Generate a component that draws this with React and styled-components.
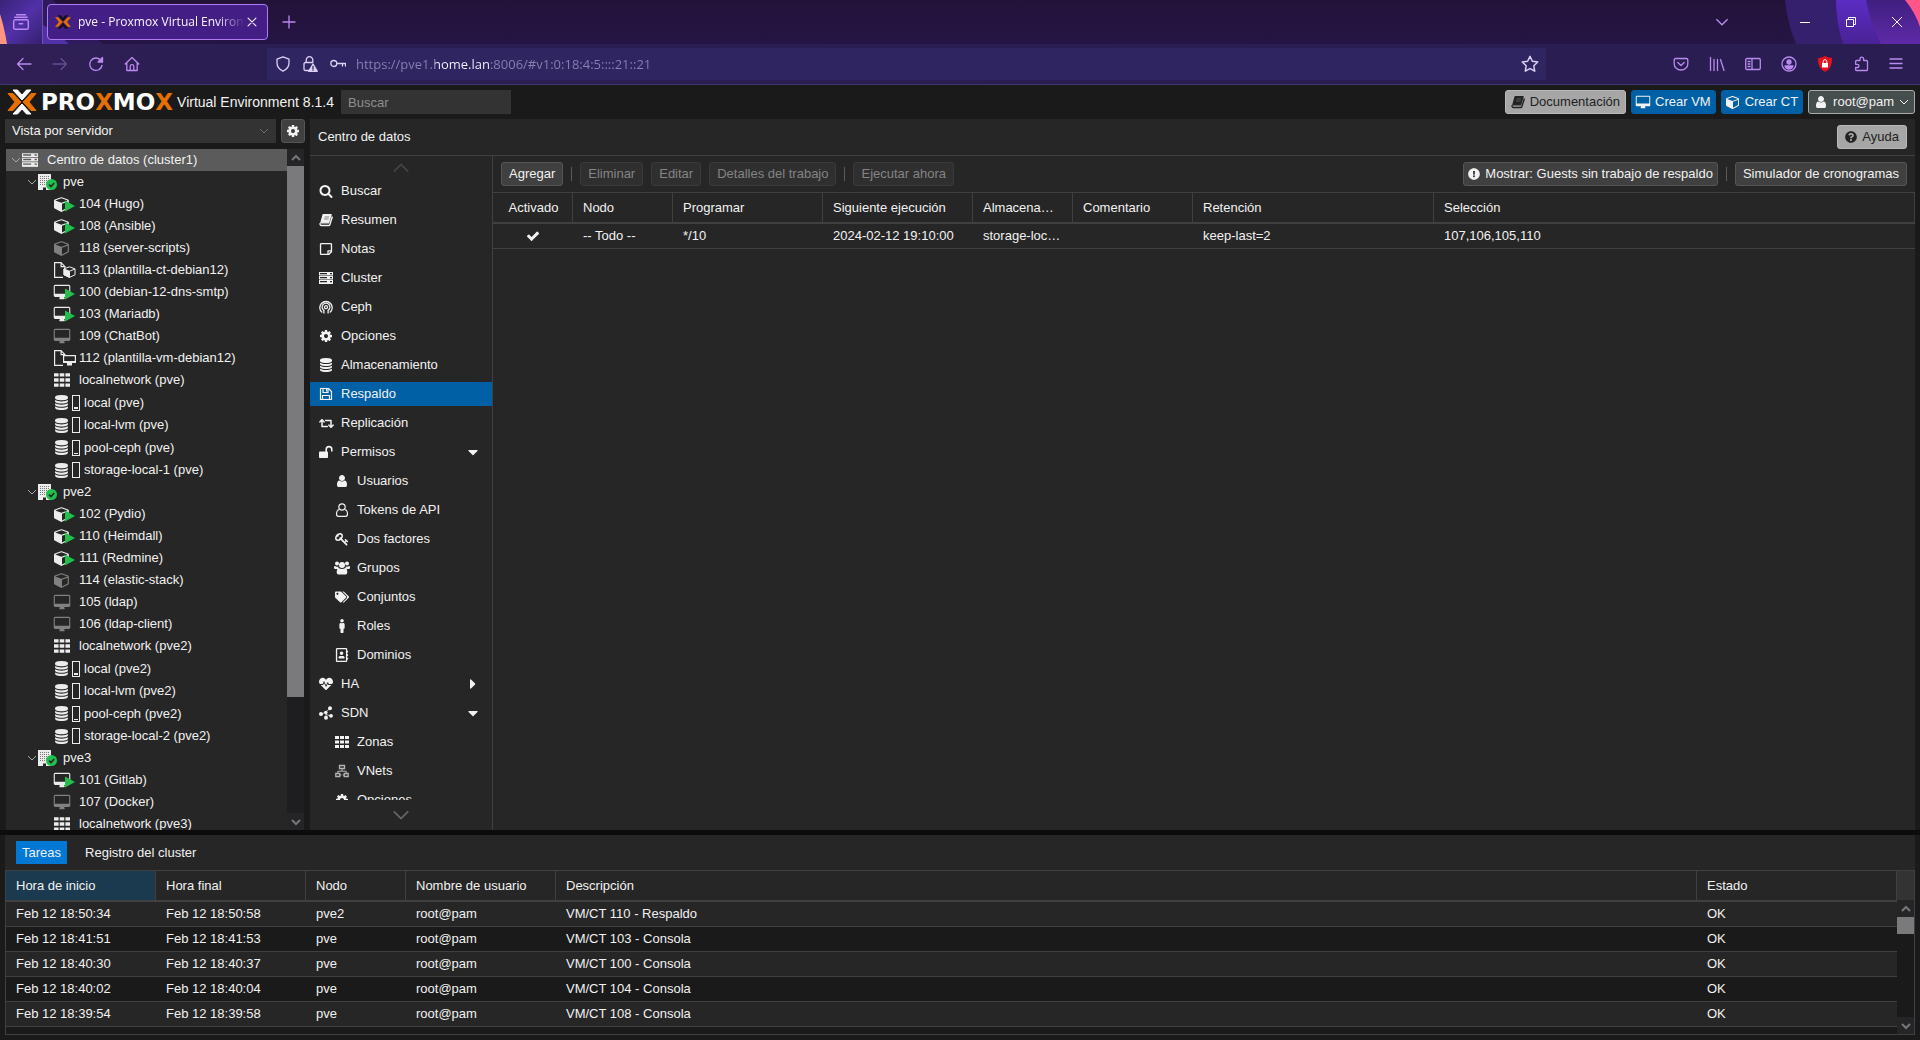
import { Fragment } from 'react'
import styled, { createGlobalStyle, css } from 'styled-components'
import {
  FaRegStickyNote,
  FaRetweet,
  FaHeartbeat,
  FaTags,
  FaMale,
  FaRegAddressBook,
  FaQuestionCircle,
  FaExclamationCircle,
  FaCaretDown,
  FaCaretRight,
} from 'react-icons/fa'

const GlobalStyle = createGlobalStyle`
  * {
    box-sizing: border-box;
  }
  body {
    margin: 0;
    background: #1a1a1a;
    color: #f2f2f2;
    font-family: 'Liberation Sans', Arial, sans-serif;
    font-size: 13px;
    line-height: 16px;
    overflow: hidden;
  }
  button, input, select {
    font: inherit;
    color: inherit;
    margin: 0;
  }
  ul {
    list-style: none;
    margin: 0;
    padding: 0;
  }
  a {
    color: inherit;
    text-decoration: none;
  }
  svg {
    display: block;
    flex: none;
  }
`

const Page = styled.div`
  display: flex;
  flex-direction: column;
  height: 100vh;
`

/* ---------- browser ---------- */

const TabStrip = styled.div`
  position: relative;
  display: flex;
  align-items: center;
  height: 44px;
  flex: none;
  background: linear-gradient(#231238, #251545);
  color: #c08df5;
  font-family: 'Open Sans', 'Noto Sans', sans-serif;
`

const ThemeArt = styled.svg`
  position: absolute;
  top: 0;
  ${(props) => (props.$side === 'left' ? 'left: 0;' : 'right: 0;')}
`

const ChromeButton = styled.button`
  position: relative;
  display: flex;
  align-items: center;
  justify-content: center;
  width: ${(props) => props.$width || 36}px;
  height: 36px;
  padding: 0;
  border: 0;
  background: none;
  color: ${(props) => props.$color || '#b98aef'};
  opacity: ${(props) => (props.disabled ? 0.4 : 1)};
`

const FirefoxView = styled(ChromeButton)`
  height: 44px;
  margin-right: 4px;
  border-right: 1px solid #6b4fa8;
`

const Tab = styled.div`
  position: relative;
  display: flex;
  align-items: center;
  width: 221px;
  height: 36px;
  padding: 0 8px 0 7px;
  border: 1px solid #ad7df0;
  border-radius: 4px;
  background: #431f85;
  color: #fbf3ff;
  font-size: 12px;
`

const TabTitle = styled.span`
  flex: 1;
  margin-left: 7px;
  overflow: hidden;
  white-space: nowrap;
  mask-image: linear-gradient(to left, transparent, #000 28px);
`

const Grow = styled.div`
  flex: 1;
`

const WindowButtons = styled.div`
  display: flex;
  margin-left: 42px;
`

const NavBar = styled.div`
  display: flex;
  align-items: center;
  height: 41px;
  flex: none;
  padding: 0 7px 0 6px;
  background: linear-gradient(90deg, #301f55, #2a1e52 12%, #2a1d52);
  border-bottom: 1px solid #40366c;
`

const Spring = styled.div`
  width: 117px;
`

const UrlField = styled.div`
  display: flex;
  align-items: center;
  flex: 1;
  height: 32px;
  padding: 0 7px 0 8px;
  background: #2f2560;
  color: #ddd0f5;
`

const UrlIcon = styled.span`
  display: flex;
  justify-content: center;
  width: ${(props) => props.$width}px;
`

/* the host part of the address stands out from the rest */
const UrlInput = styled.input`
  flex: 1;
  height: 24px;
  padding: 0;
  margin-left: 8px;
  border: 0;
  outline: 0;
  font-family: 'Open Sans', 'Noto Sans', sans-serif;
  font-size: 13px;
  color: transparent;
  background: linear-gradient(90deg, #8b7fb3 79px, #fbf5ff 79px, #fbf5ff 135px, #8b7fb3 135px);
  background-clip: text;
`

/* ---------- proxmox header ---------- */

const Header = styled.header`
  display: flex;
  align-items: center;
  flex: none;
  height: 34px;
  padding: 0 5px 0 7px;
  gap: 5px;
`

const Brand = styled.div`
  display: flex;
  align-items: center;
  gap: 4px;
  margin-right: 2px;
  font-size: 14px;
`

const Wordmark = styled.span`
  font-family: 'DejaVu Sans', sans-serif;
  font-size: 23px;
  font-weight: bold;
  line-height: 24px;
  color: #fff;

  b {
    color: #e57000;
  }
`

const SearchInput = styled.input`
  width: 170px;
  height: 24px;
  padding: 0 7px;
  border: 0;
  background: #333;

  &::placeholder {
    color: #8f8f8f;
    opacity: 1;
  }
`

const variants = {
  normal: css`
    background: #404040;
    border-color: #555;
  `,
  grey: css`
    background: #a6a6a6;
    border-color: #b9b9b9;
    color: #222;
  `,
  blue: css`
    background: #0060a6;
    border-color: #0060a6;
  `,
  user: css`
    background: #464d4d;
    border-color: #a9abab;
  `,
}

const Button = styled.button`
  display: flex;
  align-items: center;
  justify-content: center;
  gap: 5px;
  height: 24px;
  padding: 0 ${(props) => props.$pad || 7}px;
  border: 1px solid;
  border-radius: 3px;
  white-space: nowrap;
  ${(props) => variants[props.$variant || 'normal']}

  &:disabled {
    background: #2f2f2f;
    border-color: #3a3a3a;
    color: #848484;
  }
`

/* ---------- main area ---------- */

const Main = styled.main`
  display: flex;
  flex: 1;
  min-height: 0;
  padding: 0 5px;
  gap: 5px;
`

const Sidebar = styled.aside`
  display: flex;
  flex-direction: column;
  width: 300px;
  gap: 6px;
`

const ViewBar = styled.div`
  display: flex;
  gap: 5px;
`

const SelectWrap = styled.label`
  position: relative;
  flex: 1;

  svg {
    position: absolute;
    right: 7px;
    top: 7px;
    color: #6e6e6e;
    pointer-events: none;
  }
`

const ViewSelect = styled.select`
  width: 100%;
  height: 24px;
  padding: 0 7px;
  border: 0;
  border-radius: 0;
  appearance: none;
  background: #333;
`

const TreePanel = styled.div`
  display: flex;
  flex: 1;
  min-height: 0;
  margin: 0 1px;
  background: #262626;
`

const TreeList = styled.ul`
  flex: 1;
  overflow: hidden;
`

const TreeRow = styled.li`
  display: flex;
  align-items: center;
  height: ${(props) => (props.$tall ? 23 : 22)}px;
  padding-left: ${(props) => 5 + props.$depth * 16}px;
  white-space: nowrap;
  background: ${(props) => (props.$selected ? '#5b5b5b' : 'none')};
`

const Expander = styled.span`
  width: 11px;
  color: #a8a8a8;
`

const TreeIcon = styled.span`
  position: relative;
  display: flex;
  align-items: center;
  gap: 3px;
  width: ${(props) => (props.$wide ? 30 : 25)}px;
  color: ${(props) => (props.$off ? '#808080' : '#ececec')};
`

const Badge = styled.svg`
  position: absolute;
  left: ${(props) => props.$left}px;
  top: ${(props) => props.$top}px;
`

/* tall thin box which shows how full a storage is */
const Usage = styled.span`
  display: flex;
  align-items: flex-end;
  width: 8px;
  height: 16px;
  padding: 1px;
  border: 1px solid #ececec;

  &::after {
    content: '';
    width: 100%;
    height: ${(props) => props.$level}px;
    background: #ececec;
  }
`

const ScrollTrack = styled.div`
  display: flex;
  flex-direction: column;
  width: 17px;
  flex: none;
  background: #1e1e20;
`

const ScrollArrow = styled.button`
  display: flex;
  align-items: center;
  justify-content: center;
  width: 17px;
  height: 17px;
  padding: 0;
  border: 0;
  background: #252527;
  color: #77777a;
`

const ScrollSpace = styled.div`
  flex: 1;
`

const ScrollThumb = styled.div`
  height: ${(props) => props.$size};
  background: #7a7a7d;
`

const Content = styled.section`
  display: flex;
  flex-direction: column;
  flex: 1;
  min-width: 0;
  background: #262626;
`

const ContentTitle = styled.div`
  display: flex;
  align-items: center;
  justify-content: space-between;
  height: 37px;
  flex: none;
  padding: 0 8px;
  border-bottom: 1px solid #404040;
`

const ContentBody = styled.div`
  display: flex;
  flex: 1;
  min-height: 0;
`

const Menu = styled.nav`
  display: flex;
  flex-direction: column;
  width: 183px;
  border-right: 1px solid #404040;
`

const MenuScroller = styled.button`
  display: flex;
  align-items: center;
  justify-content: center;
  height: ${(props) => props.$height}px;
  flex: none;
  padding: 0;
  border: 0;
  background: none;
  color: ${(props) => props.$color};
`

const MenuList = styled.ul`
  display: flex;
  flex-direction: column;
  gap: 5px;
  flex: 1;
  min-height: 0;
  overflow: hidden;
`

const MenuLink = styled.a`
  display: flex;
  align-items: center;
  gap: 7px;
  height: 24px;
  padding: 0 11px 0 ${(props) => (props.$sub ? 24 : 8)}px;
  background: ${(props) => (props.$active ? '#0060a6' : 'none')};
`

const MenuIcon = styled.span`
  display: flex;
  justify-content: center;
  width: 16px;
`

const MenuText = styled.span`
  flex: 1;
`

const Work = styled.div`
  flex: 1;
  min-width: 0;
`

const Toolbar = styled.div`
  display: flex;
  align-items: center;
  gap: 8px;
  height: 36px;
  padding: 0 8px;
`

const Separator = styled.span`
  width: 1px;
  height: 14px;
  background: #5a5a5a;
`

const Table = styled.table`
  width: 100%;
  table-layout: fixed;
  border-collapse: separate;
  border-spacing: 0;
`

const Th = styled.th`
  height: 32px;
  padding: 0 8px 0 10px;
  border-top: 1px solid #404040;
  border-bottom: 2px solid #404040;
  border-right: 1px solid #404040;
  font-weight: normal;
  text-align: ${(props) => props.$align || 'left'};
  white-space: nowrap;
  overflow: hidden;
  text-overflow: ellipsis;
`

const Td = styled.td`
  height: 25px;
  padding: 0 10px;
  border-bottom: 1px solid #404040;
  text-align: ${(props) => props.$align || 'left'};
  white-space: nowrap;
  overflow: hidden;
  text-overflow: ellipsis;

  svg {
    margin: 0 auto;
  }
`

/* ---------- bottom log ---------- */

const Splitter = styled.div`
  height: 5px;
  flex: none;
  background: #0c0c0c;
`

const LogPanel = styled.section`
  display: flex;
  flex-direction: column;
  flex: none;
  height: 205px;
  padding: 0 5px 5px;
`

const LogTabs = styled.div`
  display: flex;
  align-items: center;
  gap: 12px;
  height: 35px;
  padding: 0 11px;
  background: #262626;
`

const LogTab = styled.button`
  height: 23px;
  padding: 0 6px;
  border: 0;
  background: ${(props) => (props.$active ? '#0078d4' : 'none')};
`

const LogGrid = styled.div`
  display: flex;
  flex: 1;
  min-height: 0;
  border: 1px solid #404040;
  border-top: 0;
`

const LogScroll = styled.div`
  flex: 1;
  overflow: hidden;

  th {
    background-color: #262626;
  }
  th[aria-sort] {
    background-color: #1b394f;
  }
  tbody tr:nth-child(odd) {
    background: #262626;
  }
`

const LogScrollbar = styled.div`
  display: flex;
  flex-direction: column;
  width: 17px;
`

const HeaderFiller = styled.div`
  height: 30px;
  flex: none;
  background: #333;
  border-top: 1px solid #404040;
`

/* ---------- icons ---------- */

const paths = {
  cube: 'M896 1629l640-349v-636l-640 233v752zm-64-865l698-254-698-254-698 254zm832-252v768q0 35-18 65t-49 47l-704 384q-28 16-61 16t-61-16l-704-384q-31-17-49-47t-18-65v-768q0-40 23-73t61-47l704-256q22-8 44-8t44 8l704 256q38 14 61 47t23 73z',
  desktop:
    'M1728 992v-832q0-13-9.5-22.5t-22.5-9.5h-1600q-13 0-22.5 9.5t-9.5 22.5v832q0 13 9.5 22.5t22.5 9.5h1600q13 0 22.5-9.5t9.5-22.5zm128-832v1088q0 66-47 113t-113 47h-544q0 37 16 77.5t32 71 16 43.5q0 26-19 45t-45 19h-512q-26 0-45-19t-19-45q0-14 16-44t32-70 16-78h-544q-66 0-113-47t-47-113v-1088q0-66 47-113t113-47h1600q66 0 113 47t47 113z',
  user: 'M1536 1399q0 109-62.5 187t-150.5 78h-854q-88 0-150.5-78t-62.5-187q0-85 8.5-160.5t31.5-152 58.5-131 94-89 134.5-34.5q131 128 313 128t313-128q76 0 134.5 34.5t94 89 58.5 131 31.5 152 8.5 160.5zm-256-887q0 159-112.5 271.5t-271.5 112.5-271.5-112.5-112.5-271.5 112.5-271.5 271.5-112.5 271.5 112.5 112.5 271.5z',
  cog: 'M1152 896q0-106-75-181t-181-75-181 75-75 181 75 181 181 75 181-75 75-181zm512-109v222q0 12-8 23t-20 13l-185 28q-19 54-39 91 35 50 107 138 10 12 10 25t-9 23q-27 37-99 108t-94 71q-12 0-26-9l-138-108q-44 23-91 38-16 136-29 186-7 28-36 28h-222q-14 0-24.5-8.5t-11.5-21.5l-28-184q-49-16-90-37l-141 107q-10 9-25 9-14 0-25-11-126-114-165-168-7-10-7-23 0-12 8-23 15-21 51-66.5t54-70.5q-27-50-41-99l-183-27q-13-2-21-12.5t-8-23.5v-222q0-12 8-23t19-13l186-28q14-46 39-92-40-57-107-138-10-12-10-24 0-10 9-23 26-36 98.5-107.5t94.5-71.5q13 0 26 10l138 107q44-23 91-38 16-136 29-186 7-28 36-28h222q14 0 24.5 8.5t11.5 21.5l28 184q49 16 90 37l142-107q9-9 24-9 13 0 25 10 129 119 165 170 7 8 7 22 0 12-8 23-15 21-51 66.5t-54 70.5q26 50 41 98l183 28q13 2 21 12.5t8 23.5z',
  search:
    'M1216 832q0-185-131.5-316.5t-316.5-131.5-316.5 131.5-131.5 316.5 131.5 316.5 316.5 131.5 316.5-131.5 131.5-316.5zm512 832q0 52-38 90t-90 38q-54 0-90-38l-343-342q-179 124-399 124-143 0-273.5-55.5t-225-150-150-225-55.5-273.5 55.5-273.5 150-225 225-150 273.5-55.5 273.5 55.5 225 150 150 225 55.5 273.5q0 220-124 399l343 343q37 37 37 90z',
  database:
    'M896 768q237 0 443-43t325-127v170q0 69-103 128t-280 93.5-385 34.5-385-34.5-280-93.5-103-128v-170q119 84 325 127t443 43zm0 768q237 0 443-43t325-127v170q0 69-103 128t-280 93.5-385 34.5-385-34.5-280-93.5-103-128v-170q119 84 325 127t443 43zm0-384q237 0 443-43t325-127v170q0 69-103 128t-280 93.5-385 34.5-385-34.5-280-93.5-103-128v-170q119 84 325 127t443 43zm0-1152q208 0 385 34.5t280 93.5 103 128v128q0 69-103 128t-280 93.5-385 34.5-385-34.5-280-93.5-103-128v-128q0-69 103-128t280-93.5 385-34.5z',
  check:
    'M1671 566q0 40-28 68l-724 724-136 136q-28 28-68 28t-68-28l-136-136-362-362q-28-28-28-68t28-68l136-136q28-28 68-28t68 28l294 295 656-657q28-28 68-28t68 28l136 136q28 28 28 68z',
  key: 'M832 512q0-80-56-136t-136-56-136 56-56 136q0 42 19 83-41-19-83-19-80 0-136 56t-56 136 56 136 136 56 136-56 56-136q0-42-19-83 41 19 83 19 80 0 136-56t56-136zm851 704q0 17-49 66t-66 49q-9 0-28.5-16t-36.5-33-38.5-40-24.5-26l-96 96 220 220q28 28 28 68 0 42-39 81t-81 39q-40 0-68-28l-671-671q-176 131-365 131-163 0-265.5-102.5t-102.5-265.5q0-160 95-313t248-248 313-95q163 0 265.5 102.5t102.5 265.5q0 189-131 365l355 355 96-96q-3-3-26-24.5t-40-38.5-33-36.5-16-28.5q0-17 49-66t66-49q13 0 23 10 6 6 46 44.5t82 79.5 86.5 86 73 78 28.5 41z',
  th: 'M0 128h512v384h-512zM640 128h512v384h-512zM1280 128h512v384h-512zM0 704h512v384h-512zM640 704h512v384h-512zM1280 704h512v384h-512zM0 1280h512v384h-512zM640 1280h512v384h-512zM1280 1280h512v384h-512z',
}

const Icon = ({ name, size = 14 }) => (
  <svg
    width={size}
    height={size}
    viewBox={name === 'desktop' ? '-32 -64 1856 1792' : '0 0 1792 1792'}
    overflow='visible'
    fill='currentColor'
    fillRule={name === 'cube' ? 'evenodd' : 'nonzero'}
  >
    <path d={paths[name]} />
  </svg>
)

const Line = ({ children, size = 16, width = 1.3 }) => (
  <svg
    width={size}
    height={size}
    viewBox='0 0 16 16'
    fill='none'
    stroke='currentColor'
    strokeWidth={width}
    strokeLinecap='round'
    strokeLinejoin='round'
  >
    {children}
  </svg>
)

const Server = ({ size = 14 }) => (
  <svg width={size} height={size} viewBox='0 0 14 14' fill='currentColor'>
    {[1, 5, 9].map((y) => (
      <Fragment key={y}>
        <path fillRule='evenodd' d={`M0 ${y}h14v3.4H0zM1 ${y + 1}h7v1.200H1zM11 ${y + 1}h2v1.200h-2z`} />
      </Fragment>
    ))}
    <path d='M0 12h14v1H0z' />
  </svg>
)

const Book = () => (
  <svg width='14' height='14' viewBox='0 0 14 14' fill='none' stroke='currentColor'>
    <path d='M4.200 1.500h8L9.600 9.800H1.800z' fill='currentColor' strokeWidth='1.200' strokeLinejoin='round' />
    <path
      d='M1.200 10.200c-.4 1.600.2 2.300 1.300 2.300h7.300c.6 0 .9-.3 1-.7L13.400 3.500'
      strokeWidth='1.400'
      strokeLinejoin='round'
    />
    <path d='M5.600 4h4.600M5 6h4.600' stroke='#666' strokeWidth='.8' />
  </svg>
)

const Floppy = () => (
  <svg width='14' height='14' viewBox='0 0 14 14' fill='none' stroke='currentColor' strokeWidth='1.200'>
    <path d='M1.500 1.500h8l3 3v8h-11z' strokeLinejoin='round' />
    <path d='M4 1.500v4h5v-4M3.500 12.500V8.500h7v4' />
    <path d='M7.600 2v2.500' />
  </svg>
)

const Ceph = () => (
  <svg width='14' height='14' viewBox='0 0 14 14' fill='none' stroke='currentColor' strokeWidth='1.300'>
    <path d='M3.200 12.600A6.200 6.200 0 1 1 10.800 12.600' />
    <path d='M4.900 13.500V10.400A3.900 3.900 0 1 1 9.100 10.400v3.100' />
    <circle cx='7' cy='7.200' r='1.500' />
  </svg>
)

const Unlock = () => (
  <svg width='14' height='14' viewBox='0 0 14 14' fill='none' stroke='currentColor'>
    <rect x='0' y='6.500' width='9' height='6.500' rx='.8' fill='currentColor' stroke='none' />
    <path d='M7.200 7V4.400a2.800 2.800 0 0 1 5.600 0V6.500' strokeWidth='1.600' />
  </svg>
)

const UserOutline = () => (
  <svg width='14' height='14' viewBox='0 0 14 14' fill='none' stroke='currentColor' strokeWidth='1.200'>
    <circle cx='7' cy='4' r='3.200' />
    <path d='M4.300 6.500C2 7 1.500 9 1.500 11c0 1.500.8 2.300 2 2.300h7c1.200 0 2-.8 2-2.300 0-2-.5-4-2.800-4.500' />
  </svg>
)

const Users = () => (
  <svg width='16' height='14' viewBox='0 0 16 14' fill='currentColor'>
    <circle cx='3' cy='2.500' r='2' />
    <circle cx='13' cy='2.500' r='2' />
    <circle cx='8' cy='4' r='3' />
    <path d='M0 5.500q1-1.200 2 0 1 .5 2.500 0Q4.500 7 3.500 8H1.200Q0 8 0 6.800zM16 5.500q-1-1.200-2 0-1 .5-2.500 0Q11.500 7 12.500 8h2.300Q16 8 16 6.800zM4.600 7q3.400 2.200 6.800 0Q13.300 7.500 13.300 11.500 13.300 13.500 11.500 13.500H4.500Q2.700 13.500 2.700 11.500 2.700 7.500 4.600 7z' />
  </svg>
)

const Sdn = () => (
  <svg width='14' height='14' viewBox='0 0 14 14' fill='currentColor'>
    <path d='M2 8.500L6.800 6M6.800 6L11 2.500M7 7.500v4M7 8.500L12 10' stroke='currentColor' strokeWidth='.7' />
    <circle cx='2' cy='8' r='2' />
    <circle cx='6.800' cy='6.500' r='1.800' />
    <circle cx='11' cy='2.300' r='2' />
    <circle cx='7' cy='11.800' r='2' />
    <circle cx='12' cy='9.800' r='1.900' />
  </svg>
)

const VNet = () => (
  <svg width='14' height='14' viewBox='0 0 14 14' fill='none' stroke='#b5b5b5'>
    <path d='M4.500 1.500h5v3h-5zM.8 9.500h4v3h-4zM9.200 9.500h4v3h-4z' strokeWidth='1.300' />
    <path d='M7 5v2.200M2.800 9V7.200h8.400V9M4.800 11h1.700M7.500 11h1.700' />
  </svg>
)

const Building = () => (
  <svg width='13' height='16' viewBox='0 0 13 16'>
    <path fill='#ececec' d='M0 0h13v16H8v-2.500H5V16H0z' />
    <path stroke='#777' strokeDasharray='1 1' d='M2 2.500h9M2 4.500h9M2 6.500h9M2 8.500h9M2 10.500h9' />
  </svg>
)

const TemplateFile = () => (
  <svg width='12' height='16' viewBox='0 0 12 16' fill='none' stroke='currentColor' strokeWidth='1.200'>
    <path d='M9 15.400H.6V.6h6.500v4h3.800v3M7 .6l4 4' />
  </svg>
)

const Chevron = ({ dir = 'down', w = 10, stroke = 1 }) => (
  <svg width={w} height={w} viewBox='0 0 10 10' fill='none' stroke='currentColor' strokeWidth={stroke}>
    <path d={dir === 'down' ? 'M1 3l4 4 4-4' : 'M1 7l4-4 4 4'} />
  </svg>
)

const Emblem = ({ width, height, color = '#fff' }) => (
  <svg width={width} height={height} viewBox='0 0 30 26' preserveAspectRatio='none' strokeLinejoin='round'>
    <path fill='#e57000' stroke='#e57000' d='M1 4.500h5l8 8.500-8 8.500H1L8 13z' />
    <path fill='#e57000' stroke='#e57000' d='M29 4.500h-5l-8 8.500 8 8.500h5L22 13z' />
    <path fill={color} stroke={color} d='M6 1h4.500L15 6l4.500-5H24l-9 10z' />
    <path fill={color} stroke={color} d='M6 25h4.500L15 20l4.500 5H24l-9-10z' />
  </svg>
)

/* ---------- data ---------- */

const tree = [
  { type: 'root', depth: 0, text: 'Centro de datos (cluster1)' },
  { type: 'node', depth: 1, text: 'pve' },
  { type: 'ct', on: true, text: '104 (Hugo)' },
  { type: 'ct', on: true, text: '108 (Ansible)' },
  { type: 'ct', text: '118 (server-scripts)' },
  { type: 'cttpl', text: '113 (plantilla-ct-debian12)' },
  { type: 'vm', on: true, text: '100 (debian-12-dns-smtp)' },
  { type: 'vm', on: true, text: '103 (Mariadb)' },
  { type: 'vm', text: '109 (ChatBot)' },
  { type: 'vmtpl', text: '112 (plantilla-vm-debian12)' },
  { type: 'net', text: 'localnetwork (pve)' },
  { type: 'storage', level: 2, text: 'local (pve)' },
  { type: 'storage', level: 0, text: 'local-lvm (pve)' },
  { type: 'storage', level: 1, text: 'pool-ceph (pve)' },
  { type: 'storage', level: 0, text: 'storage-local-1 (pve)' },
  { type: 'node', depth: 1, text: 'pve2' },
  { type: 'ct', on: true, text: '102 (Pydio)' },
  { type: 'ct', on: true, text: '110 (Heimdall)' },
  { type: 'ct', on: true, text: '111 (Redmine)' },
  { type: 'ct', text: '114 (elastic-stack)' },
  { type: 'vm', text: '105 (ldap)' },
  { type: 'vm', text: '106 (ldap-client)' },
  { type: 'net', text: 'localnetwork (pve2)' },
  { type: 'storage', level: 2, text: 'local (pve2)' },
  { type: 'storage', level: 0, text: 'local-lvm (pve2)' },
  { type: 'storage', level: 1, text: 'pool-ceph (pve2)' },
  { type: 'storage', level: 0, text: 'storage-local-2 (pve2)' },
  { type: 'node', depth: 1, text: 'pve3' },
  { type: 'vm', on: true, text: '101 (Gitlab)' },
  { type: 'vm', text: '107 (Docker)' },
  { type: 'net', text: 'localnetwork (pve3)' },
]

const menu = [
  { text: 'Buscar', icon: <Icon name='search' /> },
  { text: 'Resumen', icon: <Book /> },
  { text: 'Notas', icon: <FaRegStickyNote size={14} /> },
  { text: 'Cluster', icon: <Server /> },
  { text: 'Ceph', icon: <Ceph /> },
  { text: 'Opciones', icon: <Icon name='cog' /> },
  { text: 'Almacenamiento', icon: <Icon name='database' /> },
  { text: 'Respaldo', icon: <Floppy />, active: true },
  { text: 'Replicación', icon: <FaRetweet size={15} /> },
  { text: 'Permisos', icon: <Unlock />, caret: 'down' },
  { text: 'Usuarios', icon: <Icon name='user' />, sub: true },
  { text: 'Tokens de API', icon: <UserOutline />, sub: true },
  { text: 'Dos factores', icon: <Icon name='key' />, sub: true },
  { text: 'Grupos', icon: <Users />, sub: true },
  { text: 'Conjuntos', icon: <FaTags size={14} />, sub: true },
  { text: 'Roles', icon: <FaMale size={14} />, sub: true },
  { text: 'Dominios', icon: <FaRegAddressBook size={14} />, sub: true },
  { text: 'HA', icon: <FaHeartbeat size={14} />, caret: 'right' },
  { text: 'SDN', icon: <Sdn />, caret: 'down' },
  { text: 'Zonas', icon: <Icon name='th' />, sub: true },
  { text: 'VNets', icon: <VNet />, sub: true },
  { text: 'Opciones', icon: <Icon name='cog' />, sub: true },
]

const tasks = [
  ['Feb 12 18:50:34', 'Feb 12 18:50:58', 'pve2', 'root@pam', 'VM/CT 110 - Respaldo', 'OK'],
  ['Feb 12 18:41:51', 'Feb 12 18:41:53', 'pve', 'root@pam', 'VM/CT 103 - Consola', 'OK'],
  ['Feb 12 18:40:30', 'Feb 12 18:40:37', 'pve', 'root@pam', 'VM/CT 100 - Consola', 'OK'],
  ['Feb 12 18:40:02', 'Feb 12 18:40:04', 'pve', 'root@pam', 'VM/CT 104 - Consola', 'OK'],
  ['Feb 12 18:39:54', 'Feb 12 18:39:58', 'pve', 'root@pam', 'VM/CT 108 - Consola', 'OK'],
  ['', '', '', '', '', ''],
]

/* ---------- parts ---------- */

const Play = () => (
  <Badge $left={11} $top={4} width='10' height='12' viewBox='0 0 10 12'>
    <path d='M0 0.500L10 6 0 11.500z' fill='#21bf4b' />
  </Badge>
)

const ItemIcon = ({ item }) => {
  if (item.type === 'root') return <Server size={16} />
  if (item.type === 'node')
    return (
      <>
        <Building />
        <Badge $left={8} $top={5} width='11' height='11' viewBox='0 0 11 11'>
          <circle cx='5.500' cy='5.500' r='5.500' fill='#21bf4b' />
          <path d='M3 5.600l2 2 3.200-3.600' fill='none' stroke='#262626' strokeWidth='1.500' />
        </Badge>
      </>
    )
  if (item.type === 'ct' || item.type === 'vm')
    return (
      <>
        <Icon name={item.type === 'ct' ? 'cube' : 'desktop'} size={16} />
        {item.on && <Play />}
      </>
    )
  if (item.type === 'cttpl' || item.type === 'vmtpl')
    return (
      <>
        <TemplateFile />
        <Badge $left={9} $top={4} width='13' height='12' viewBox='0 0 13 12'>
          {item.type === 'cttpl' ? (
            <>
              <path d='M6.500 .8L12 2.800v6L6.500 11.400 1 8.800v-6z' fill='#262626' stroke='currentColor' />
              <path d='M1 3l5.500 2.200V11.400L1 8.800zM6.500 5.200L12 3' fill='currentColor' stroke='currentColor' />
            </>
          ) : (
            <>
              <path d='M.6 1.600h11.800v6.800H.6z' fill='#262626' stroke='currentColor' strokeWidth='1.200' />
              <path d='M1 7h11v2H1zM4 9h5v2.500H4z' fill='currentColor' />
            </>
          )}
        </Badge>
      </>
    )
  if (item.type === 'net') return <Icon name='th' size={16} />
  return (
    <>
      <Icon name='database' size={15} />
      <Usage $level={item.level} />
    </>
  )
}

const Browser = () => (
  <>
    <TabStrip>
      <ThemeArt $side='left' width='110' height='44'>
        <defs>
          <linearGradient id='left' x2='1' y2='1'>
            <stop offset='0' stopColor='#3a2378' />
            <stop offset='.5' stopColor='#5230a8' />
            <stop offset='1' stopColor='#35206e' />
          </linearGradient>
        </defs>
        <path d='M0 0h42v44H0z' fill='url(#left)' />
        <path d='M43 0h10l50 44H43z' fill='#2f1a5e' />
        <path d='M43 25q15 8 26 19H43z' fill='#5230a8' />
        <path d='M0 14q4 12 7 30H0z' fill='#ff9580' />
      </ThemeArt>
      <ThemeArt $side='right' width='140' height='44'>
        <defs>
          <linearGradient id='band' x2='0' y2='1'>
            <stop offset='0' stopColor='#5b2dc4' />
            <stop offset='1' stopColor='#4a2296' />
          </linearGradient>
          <linearGradient id='edge' x2='0' y2='1'>
            <stop offset='0' stopColor='#3f1f80' />
            <stop offset='1' stopColor='#5f2aa8' />
          </linearGradient>
        </defs>
        <path d='M5 0q2 22 11 44h124V0z' fill='#35206e' />
        <path d='M56 0q0 22 7 44h77V0z' fill='url(#band)' />
        <path d='M86 0q4 22 15 44h39V0z' fill='url(#edge)' />
        <path d='M125 0q10 12 15 27V0z' fill='#ff5588' />
      </ThemeArt>
      <FirefoxView $width={43} aria-label='Firefox View'>
        <Line size={18}>
          <rect x='1.500' y='6' width='13' height='8.500' rx='1.500' />
          <path d='M2.500 3.800h11M4 1.500h8M6.500 9.500h3' />
        </Line>
      </FirefoxView>
      <Tab>
        <Emblem width={16} height={14} color='#15101c' />
        <TabTitle>pve - Proxmox Virtual Environment</TabTitle>
        <Line size={14}>
          <path d='M3.500 3.500l9 9M12.500 3.500l-9 9' />
        </Line>
      </Tab>
      <ChromeButton $width={42} aria-label='Nueva pestaña'>
        <Line>
          <path d='M8 2v12M2 8h12' />
        </Line>
      </ChromeButton>
      <Grow />
      <ChromeButton aria-label='Listar pestañas'>
        <Chevron w={14} />
      </ChromeButton>
      <WindowButtons>
        <ChromeButton $width={46} $color='#fff' aria-label='Minimizar'>
          <svg width='10' height='10' stroke='currentColor'>
            <path d='M0 5.500h10' />
          </svg>
        </ChromeButton>
        <ChromeButton $width={46} $color='#fff' aria-label='Restaurar'>
          <svg width='10' height='10' stroke='currentColor' fill='none'>
            <path d='M.5 2.500h7v7h-7zM2.500 2.500v-2h7v7h-2' />
          </svg>
        </ChromeButton>
        <ChromeButton $width={46} $color='#fff' aria-label='Cerrar'>
          <svg width='10' height='10' stroke='currentColor'>
            <path d='M0 0l10 10M10 0L0 10' />
          </svg>
        </ChromeButton>
      </WindowButtons>
    </TabStrip>
    <NavBar>
      <ChromeButton aria-label='Atrás'>
        <Line>
          <path d='M15 8H1.500M7 2.500L1.500 8 7 13.500' />
        </Line>
      </ChromeButton>
      <ChromeButton disabled aria-label='Adelante'>
        <Line>
          <path d='M1 8h13.500M9 2.500L14.500 8 9 13.500' />
        </Line>
      </ChromeButton>
      <ChromeButton aria-label='Recargar'>
        <Line>
          <path d='M14 9.500A6.200 6.200 0 1 1 12.500 4L14.500 6' />
          <path d='M14.500 1.500V6H10z' fill='currentColor' />
        </Line>
      </ChromeButton>
      <ChromeButton aria-label='Inicio'>
        <Line>
          <path d='M1.200 8L8 1.500 14.800 8M2.800 7v7.500h10.400V7M6.200 14.500V10.500a1.800 1.800 0 0 1 3.600 0v4' />
        </Line>
      </ChromeButton>
      <Spring />
      <UrlField>
        <UrlIcon $width={16}>
          <Line>
            <path d='M8 .8l6 2.400v3.600c0 4-2.500 6.800-6 8.400-3.500-1.600-6-4.400-6-8.400V3.200z' />
          </Line>
        </UrlIcon>
        <UrlIcon $width={37}>
          <Line>
            <path d='M7 14.500H3.500c-1 0-1.500-.5-1.500-1.500V8c0-1 .5-1.500 1.500-1.500h7M4.200 6.500V4a3.300 3.300 0 0 1 6.600 0v2.500' />
            <path d='M11 8l4.300 7.300H6.700z' fill='currentColor' />
            <path d='M11 10.500v2M11 14v.2' stroke='#2f2560' />
          </Line>
        </UrlIcon>
        <UrlIcon $width={20}>
          <Line>
            <circle cx='3.800' cy='7.500' r='3' />
            <path d='M7 7.500h8.500v2.500M12.500 7.500V10' />
          </Line>
        </UrlIcon>
        <UrlInput aria-label='Dirección' defaultValue='https://pve1.home.lan:8006/#v1:0:18:4:5::::21::21' />
        <Line size={18}>
          <path d='M8 1.200l2.100 4.400 4.800.6-3.500 3.400.8 4.800L8 12.100l-4.200 2.300.8-4.800L1.100 6.200l4.800-.6z' />
        </Line>
      </UrlField>
      <Spring />
      <ChromeButton aria-label='Pocket'>
        <Line>
          <path d='M2.500 2.500h11c.8 0 1.300.5 1.300 1.300V8a6.800 6 0 0 1-13.600 0V3.800c0-.8.500-1.300 1.300-1.300zM4.800 6.500L8 9.500l3.200-3' />
        </Line>
      </ChromeButton>
      <ChromeButton aria-label='Biblioteca'>
        <Line>
          <path d='M1.500 1.500v13M5 3.500v11M8.500 3.500v11M11.500 3.500l3.500 11' />
        </Line>
      </ChromeButton>
      <ChromeButton aria-label='Barra lateral'>
        <Line>
          <path d='M2 2.500h12c.8 0 1.300.5 1.300 1.300v8.400c0 .8-.5 1.300-1.300 1.300H2c-.8 0-1.300-.5-1.300-1.300V3.800c0-.8.500-1.300 1.300-1.300zM7 2.500v11M3 5.500h2M3 8h2M3 10.500h2' />
        </Line>
      </ChromeButton>
      <ChromeButton aria-label='Cuenta'>
        <Line>
          <circle cx='8' cy='8' r='7' />
          <circle cx='8' cy='6' r='2' fill='currentColor' />
          <path d='M4 10h8q-1 3-4 3t-4-3z' fill='currentColor' />
        </Line>
      </ChromeButton>
      <ChromeButton aria-label='Bloqueador'>
        <svg width='16' height='16' viewBox='0 0 16 16'>
          <path d='M8 0q3 2 7 2 .5 10-7 14Q.5 12 1 2q4 0 7-2z' fill='#e3121c' />
          <path d='M5 7h6v4.500H5z' fill='#fff' />
          <path d='M6.200 7V5.500a1.800 1.800 0 0 1 3.600 0V7' fill='none' stroke='#fff' />
        </svg>
      </ChromeButton>
      <ChromeButton aria-label='Extensiones'>
        <Line>
          <path d='M5 4.500h2V3a1.800 1.800 0 0 1 3.600 0v1.500h3c.6 0 .9.300.9.900v8.200c0 .6-.3.900-.9.900H3.500c-.6 0-.9-.3-.9-.9V11.500h1.800a1.600 1.600 0 0 0 0-3.200H2.600V5.400c0-.6.300-.9.900-.9z' />
        </Line>
      </ChromeButton>
      <ChromeButton $width={34} aria-label='Menú'>
        <Line>
          <path d='M2 3h12M2 7.500h12M2 12h12' />
        </Line>
      </ChromeButton>
    </NavBar>
  </>
)

const HeaderBar = () => (
  <Header>
    <Brand>
      <Emblem width={30} height={26} />
      <Wordmark>
        PRO<b>X</b>MO<b>X</b>
      </Wordmark>
      <span>Virtual Environment 8.1.4</span>
    </Brand>
    <SearchInput aria-label='Buscar' placeholder='Buscar' />
    <Grow />
    <Button $variant='grey' $pad={5}>
      <Book />
      Documentación
    </Button>
    <Button $variant='blue' $pad={4}>
      <Icon name='desktop' />
      Crear VM
    </Button>
    <Button $variant='blue' $pad={4}>
      <Icon name='cube' />
      Crear CT
    </Button>
    <Button $variant='user' $pad={5}>
      <Icon name='user' />
      root@pam
      <Chevron />
    </Button>
  </Header>
)

const ResourceTree = () => (
  <Sidebar>
    <ViewBar>
      <SelectWrap>
        <ViewSelect aria-label='Vista'>
          <option>Vista por servidor</option>
        </ViewSelect>
        <Chevron />
      </SelectWrap>
      <Button $pad={4} aria-label='Configuración'>
        <Icon name='cog' />
      </Button>
    </ViewBar>
    <TreePanel>
      <TreeList>
        {tree.map((item) => {
          const depth = item.depth ?? 2
          const storage = item.type === 'storage'
          return (
            <TreeRow key={item.text} $depth={depth} $selected={depth === 0} $tall={storage && item.level > 0}>
              <Expander>{depth < 2 && <Chevron />}</Expander>
              <TreeIcon $wide={storage} $off={['ct', 'vm'].includes(item.type) && !item.on}>
                <ItemIcon item={item} />
              </TreeIcon>
              {item.text}
            </TreeRow>
          )
        })}
      </TreeList>
      <ScrollTrack>
        <ScrollArrow aria-label='Subir'>
          <Chevron dir='up' stroke={2} />
        </ScrollArrow>
        <ScrollSpace>
          <ScrollThumb $size='82%' />
        </ScrollSpace>
        <ScrollArrow aria-label='Bajar'>
          <Chevron stroke={2} />
        </ScrollArrow>
      </ScrollTrack>
    </TreePanel>
  </Sidebar>
)

const SideMenu = () => (
  <Menu>
    <MenuScroller $height={23} $color='#454545' aria-label='Subir menú'>
      <Chevron dir='up' w={18} />
    </MenuScroller>
    <MenuList>
      {menu.map((item, i) => (
        <li key={i}>
          <MenuLink href='#' $sub={item.sub} $active={item.active}>
            <MenuIcon>{item.icon}</MenuIcon>
            <MenuText>{item.text}</MenuText>
            {item.caret === 'down' && <FaCaretDown size={16} />}
            {item.caret === 'right' && <FaCaretRight size={16} />}
          </MenuLink>
        </li>
      ))}
    </MenuList>
    <MenuScroller $height={30} $color='#666' aria-label='Bajar menú'>
      <Chevron w={18} />
    </MenuScroller>
  </Menu>
)

const BackupJobs = () => (
  <Work>
    <Toolbar>
      <Button>Agregar</Button>
      <Separator />
      <Button disabled>Eliminar</Button>
      <Button disabled>Editar</Button>
      <Button disabled>Detalles del trabajo</Button>
      <Separator />
      <Button disabled>Ejecutar ahora</Button>
      <Grow />
      <Button $pad={4}>
        <FaExclamationCircle size={12} />
        Mostrar: Guests sin trabajo de respaldo
      </Button>
      <Separator />
      <Button>Simulador de cronogramas</Button>
    </Toolbar>
    <Table>
      <colgroup>
        <col width='80' />
        <col width='100' />
        <col width='150' />
        <col width='150' />
        <col width='100' />
        <col width='120' />
        <col width='241' />
        <col />
      </colgroup>
      <thead>
        <tr>
          <Th $align='center'>Activado</Th>
          <Th>Nodo</Th>
          <Th>Programar</Th>
          <Th>Siguiente ejecución</Th>
          <Th>Almacenamiento</Th>
          <Th>Comentario</Th>
          <Th>Retención</Th>
          <Th>Selección</Th>
        </tr>
      </thead>
      <tbody>
        <tr>
          <Td $align='center'>
            <Icon name='check' />
          </Td>
          <Td>-- Todo --</Td>
          <Td>*/10</Td>
          <Td>2024-02-12 19:10:00</Td>
          <Td>storage-local-1</Td>
          <Td />
          <Td>keep-last=2</Td>
          <Td>107,106,105,110</Td>
        </tr>
      </tbody>
    </Table>
  </Work>
)

const TaskLog = () => (
  <LogPanel>
    <LogTabs>
      <LogTab $active>Tareas</LogTab>
      <LogTab>Registro del cluster</LogTab>
    </LogTabs>
    <LogGrid>
      <LogScroll>
        <Table>
          <colgroup>
            <col width='150' />
            <col width='150' />
            <col width='100' />
            <col width='150' />
            <col />
            <col width='200' />
          </colgroup>
          <thead>
            <tr>
              <Th aria-sort='descending'>Hora de inicio</Th>
              <Th>Hora final</Th>
              <Th>Nodo</Th>
              <Th>Nombre de usuario</Th>
              <Th>Descripción</Th>
              <Th>Estado</Th>
            </tr>
          </thead>
          <tbody>
            {tasks.map((task, i) => (
              <tr key={i}>
                {task.map((cell, j) => (
                  <Td key={j}>{cell}</Td>
                ))}
              </tr>
            ))}
          </tbody>
        </Table>
      </LogScroll>
      <LogScrollbar>
        <HeaderFiller />
        <ScrollArrow aria-label='Subir registro'>
          <Chevron dir='up' stroke={2} />
        </ScrollArrow>
        <ScrollThumb $size='17px' />
        <Grow />
        <ScrollArrow aria-label='Bajar registro'>
          <Chevron stroke={2} />
        </ScrollArrow>
      </LogScrollbar>
    </LogGrid>
  </LogPanel>
)

const App = () => {
  return (
    <Page>
      <GlobalStyle />
      <Browser />
      <HeaderBar />
      <Main>
        <ResourceTree />
        <Content>
          <ContentTitle>
            Centro de datos
            <Button $variant='grey'>
              <FaQuestionCircle size={12} />
              Ayuda
            </Button>
          </ContentTitle>
          <ContentBody>
            <SideMenu />
            <BackupJobs />
          </ContentBody>
        </Content>
      </Main>
      <Splitter />
      <TaskLog />
    </Page>
  )
}

export default App
